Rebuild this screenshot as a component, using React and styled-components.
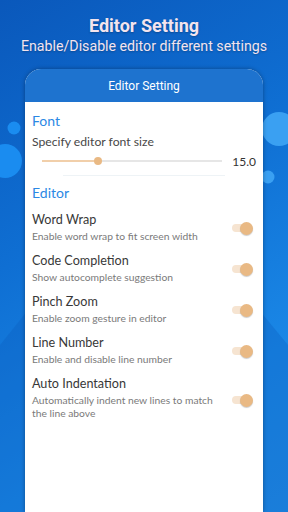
import React from "react";
import styled, { createGlobalStyle } from "styled-components";

const Global = createGlobalStyle`
  html, body { margin: 0; padding: 0; }
  body { width: 288px; height: 512px; overflow: hidden; }
  #root { width: 288px; height: 512px; }
`;

const Screen = styled.div`
  position: relative;
  width: 288px;
  height: 512px;
  overflow: hidden;
  background: linear-gradient(150deg, #0a58bb 0%, #0f6fd3 40%, #1a87e6 75%, #238fe8 100%);
  display: flex;
  flex-direction: column;
  align-items: center;
  font-family: Roboto, "Noto Sans", sans-serif;
`;

const Deco = styled.svg`
  position: absolute;
  left: 0;
  top: 0;
  width: 288px;
  height: 512px;
  pointer-events: none;
`;

const Hero = styled.div`
  position: relative;
  display: flex;
  flex-direction: column;
  align-items: center;
  padding-top: 14px;
  color: #f3e4ee;
  text-shadow: 0 1px 2px rgba(0, 0, 0, 0.25);
`;

const HeroTitle = styled.div`
  font-size: 18px;
  font-weight: 700;
  line-height: 24px;
`;

const HeroSub = styled.div`
  font-size: 14.2px;
  line-height: 18px;
  margin-top: -1px;
`;

const Phone = styled.div`
  position: relative;
  margin-top: 14px;
  width: 238px;
  flex: 1;
  border-radius: 16px 16px 0 0;
  overflow: hidden;
  background: #fff;
  box-shadow: 0 0 4px rgba(0, 0, 0, 0.35);
  display: flex;
  flex-direction: column;
`;

const Bar = styled.div`
  height: 33px;
  flex-shrink: 0;
  background: #1e73cf;
  color: #fff;
  font-size: 12px;
  display: flex;
  align-items: center;
  justify-content: center;
`;

const Body = styled.div`
  padding: 9px 7px 0 7px;
  display: flex;
  flex-direction: column;
  font-family: Lato, "Noto Sans", sans-serif;
`;

const Section = styled.div`
  color: #2b88e4;
  font-size: 14px;
  line-height: 20px;
  margin-top: ${(p) => p.$gap || 0}px;
`;

const Label = styled.div`
  color: #474747;
  font-size: 12.2px;
  line-height: 16px;
  margin-top: 3px;
`;

const SliderRow = styled.div`
  display: flex;
  align-items: center;
  height: 20px;
  margin-top: 1px;
`;

const Track = styled.div`
  position: relative;
  margin-left: 10px;
  width: 180px;
  height: 2px;
  background: #e6e6e6;
`;

const Fill = styled.div`
  height: 2px;
  background: #f1cfaa;
`;

const Thumb = styled.div`
  position: absolute;
  top: -3px;
  width: 8px;
  height: 8px;
  margin-left: -4px;
  border-radius: 50%;
  background: #e9b984;
`;

const Value = styled.div`
  margin-left: auto;
  font-size: 12px;
  color: #333;
`;

const Divider = styled.div`
  margin: 4px 0 0 31px;
  width: 162px;
  height: 1px;
  background: #eef3f6;
`;

const Item = styled.div`
  display: flex;
  align-items: flex-start;
  padding: 8px 0 1px;
`;

const Texts = styled.div`
  flex: 1;
  display: flex;
  flex-direction: column;
`;

const ItemTitle = styled.div`
  color: #383838;
  font-size: 12.6px;
  line-height: 18px;
`;

const ItemSub = styled.div`
  color: #7a7a7a;
  font-size: 10.3px;
  line-height: 13px;
  margin-top: 1px;
  max-width: 185px;
`;

const Toggle = styled.div`
  position: relative;
  width: 18px;
  height: 8px;
  border-radius: 4px;
  background: #f6e4d1;
  margin-right: 6px;
  margin-top: ${(p) => p.$top}px;
  flex-shrink: 0;
`;

const Knob = styled.div`
  position: absolute;
  right: -3px;
  top: -2.5px;
  width: 13px;
  height: 13px;
  border-radius: 50%;
  background: #e9b984;
  box-shadow: 0 1px 1px rgba(0, 0, 0, 0.2);
`;

const items = [
  ["Word Wrap", "Enable word wrap to fit screen width", 13],
  ["Code Completion", "Show autocomplete suggestion", 13],
  ["Pinch Zoom", "Enable zoom gesture in editor", 13],
  ["Line Number", "Enable and disable line number", 13],
  ["Auto Indentation", "Automatically indent new lines to match the line above", 21],
];

export default function App() {
  return (
    <Screen>
      <Global />
      <Deco viewBox="0 0 288 512">
        <polygon points="0,345 60,270 120,512 0,512" fill="#0c5fbf" opacity="0.35" />
        <polygon points="288,345 255,305 240,512 288,512" fill="#0c5fbf" opacity="0.35" />
        <circle cx="14" cy="128" r="6.5" fill="#1a8cf0" />
        <circle cx="5" cy="161" r="17" fill="#1a8cf0" />
        <circle cx="279" cy="129" r="17" fill="#3aa0f2" />
        <circle cx="268" cy="177" r="6.5" fill="#3aa0f2" />
      </Deco>
      <Hero>
        <HeroTitle>Editor Setting</HeroTitle>
        <HeroSub>Enable/Disable editor different settings</HeroSub>
      </Hero>
      <Phone>
        <Bar>Editor Setting</Bar>
        <Body>
          <Section>Font</Section>
          <Label>Specify editor font size</Label>
          <SliderRow>
            <Track>
              <Fill style={{ width: "56px" }} />
              <Thumb style={{ left: "56px" }} />
            </Track>
            <Value>15.0</Value>
          </SliderRow>
          <Divider />
          <Section $gap={7}>Editor</Section>
          {items.map(([t, s, top]) => (
            <Item key={t}>
              <Texts>
                <ItemTitle>{t}</ItemTitle>
                <ItemSub>{s}</ItemSub>
              </Texts>
              <Toggle $top={top}>
                <Knob />
              </Toggle>
            </Item>
          ))}
        </Body>
      </Phone>
    </Screen>
  );
}
